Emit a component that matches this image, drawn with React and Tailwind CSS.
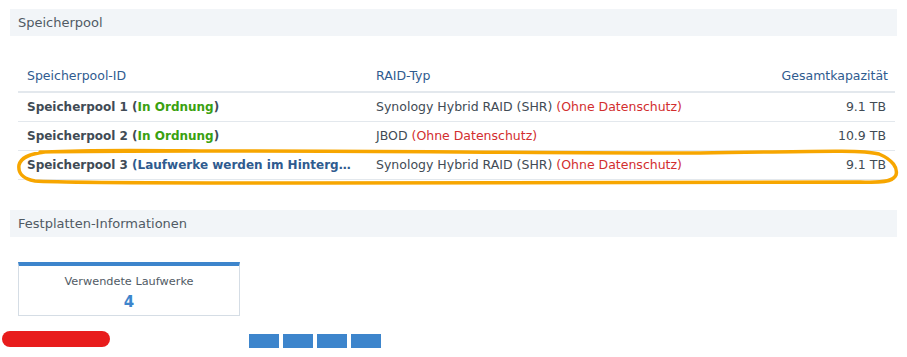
import React from "react";

const font = { fontFamily: '"DejaVu Sans", Verdana, sans-serif' };

function Row({ name, status, statusClass, raid, cap }) {
  return (
    <div className="flex h-[29px] items-center border-b border-[#e3e8ed] text-[12.5px]">
      <div className="w-[349px] shrink-0 truncate pl-[9px] text-[12px] font-bold text-[#414b55]">
        {name} (<span className={statusClass}>{status}</span>)
      </div>
      <div className="flex-1 pl-[9px] text-[#414b55]">
        {raid} <span className="text-[#d22e2e]">(Ohne Datenschutz)</span>
      </div>
      <div className="w-[150px] pr-[9px] text-right text-[#414b55]">{cap}</div>
    </div>
  );
}

export default function App() {
  return (
    <div className="relative h-[357px] w-[907px] overflow-hidden bg-white" style={font}>
      <div className="pl-[10px] pr-[10px] pt-[9px]">
        <div className="flex h-[27px] items-center bg-[#f2f5f8] pl-[8px] text-[13px] text-[#505a64]">
          Speicherpool
        </div>
        <div className="ml-[8px] mr-[2px] mt-[25px]">
          <div className="flex h-[32px] items-center border-b-2 border-[#e3e8ed] text-[12.5px] text-[#2f5b8f]">
            <div className="w-[349px] shrink-0 pl-[9px]">Speicherpool-ID</div>
            <div className="flex-1 pl-[9px]">RAID-Typ</div>
            <div className="w-[150px] pr-[7px] text-right">Gesamtkapazität</div>
          </div>
          <Row name="Speicherpool 1" status="In Ordnung" statusClass="text-[#3aa10f]" raid="Synology Hybrid RAID (SHR)" cap="9.1 TB" />
          <Row name="Speicherpool 2" status="In Ordnung" statusClass="text-[#3aa10f]" raid="JBOD" cap="10.9 TB" />
          <div className="flex h-[29px] items-center border-b border-[#e3e8ed] text-[12.5px]">
            <div className="w-[349px] shrink-0 truncate pl-[9px] pr-[14px] text-[12px] font-bold text-[#2f5b8f]">
              <span className="text-[#414b55]">Speicherpool 3 </span>(Laufwerke werden im Hintergrund optimiert)
            </div>
            <div className="flex-1 pl-[9px] text-[#414b55]">
              Synology Hybrid RAID (SHR) <span className="text-[#d22e2e]">(Ohne Datenschutz)</span>
            </div>
            <div className="w-[150px] pr-[9px] text-right text-[#414b55]">9.1 TB</div>
          </div>
        </div>
        <div className="mt-[30px] flex h-[27px] items-center bg-[#f2f5f8] pl-[8px] text-[13px] text-[#505a64]">
          Festplatten-Informationen
        </div>
        <div className="ml-[8px] mt-[25px] flex h-[54px] w-[222px] flex-col items-center border border-t-4 border-[#d5dde5] border-t-[#3d85cc]">
          <div className="mt-[8px] text-[11.3px] text-[#505a64]">Verwendete Laufwerke</div>
          <div className="mt-[2px] text-[15px] font-bold leading-[18px] text-[#3d85cc]">4</div>
        </div>
        <div className="mt-[15px] flex items-start">
          <div className="ml-[-8px] h-[16px] w-[108px] rounded-[8px] bg-[#e81c1c]" />
          <div className="ml-[139px] mt-[3px] flex gap-[4px]">
            <div className="h-[14px] w-[30px] bg-[#3d85cc]" />
            <div className="h-[14px] w-[30px] bg-[#3d85cc]" />
            <div className="h-[14px] w-[30px] bg-[#3d85cc]" />
            <div className="h-[14px] w-[30px] bg-[#3d85cc]" />
          </div>
        </div>
      </div>
      <svg className="pointer-events-none absolute left-0 top-0" width="907" height="357">
        <path
          d="M40 152 C200 149 500 153 700 153 C800 152 860 149 879 154 C893 160 898 168 896 175 C893 182 880 183 860 182 C700 181 500 184 300 183 C150 183 60 183 35 181 C22 179 18 172 19 165 C21 158 28 154 45 152 C100 149 180 151 220 151"
          fill="none"
          stroke="#f7a600"
          strokeWidth="3.5"
          strokeLinecap="round"
        />
      </svg>
    </div>
  );
}
